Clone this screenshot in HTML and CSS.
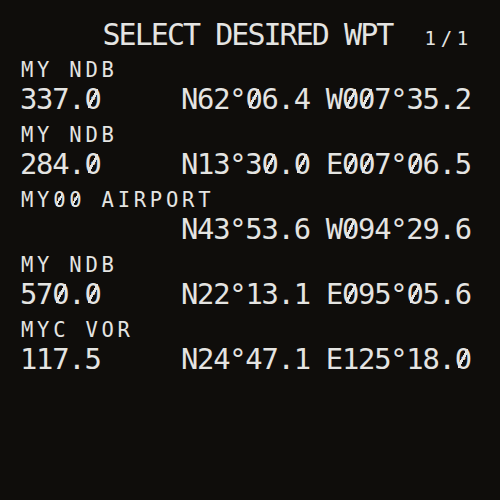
FILE: index.html
```html
<!DOCTYPE html>
<html>
<head>
<meta charset="utf-8">
<link rel="stylesheet" href="styles.css">
</head>
<body>
<div class="screen">
  <div class="title">     SELECT DESIRED WPT  <span class="page">1/1</span></div>
  <div class="pair">
    <div class="label">MY NDB</div>
    <div class="big">337.<span class="z">0</span>     N62°<span class="z">0</span>6.4 W<span class="z">0</span><span class="z">0</span>7°35.2</div>
  </div>
  <div class="pair">
    <div class="label">MY NDB</div>
    <div class="big">284.<span class="z">0</span>     N13°3<span class="z">0</span>.<span class="z">0</span> E<span class="z">0</span><span class="z">0</span>7°<span class="z">0</span>6.5</div>
  </div>
  <div class="pair">
    <div class="label">MY<span class="z">0</span><span class="z">0</span> AIRPORT</div>
    <div class="big">          N43°53.6 W<span class="z">0</span>94°29.6</div>
  </div>
  <div class="pair">
    <div class="label">MY NDB</div>
    <div class="big">57<span class="z">0</span>.<span class="z">0</span>     N22°13.1 E<span class="z">0</span>95°<span class="z">0</span>5.6</div>
  </div>
  <div class="pair">
    <div class="label">MYC VOR</div>
    <div class="big">117.5     N24°47.1 E125°18.<span class="z">0</span></div>
  </div>
</div>
</body>
</html>
```
FILE: styles.css
```css
html, body {
  margin: 0;
  padding: 0;
  background: #0f0d0b;
}
.screen {
  width: 500px;
  height: 500px;
  box-sizing: border-box;
  padding: 11px 0 0 20px;
  background: #0f0d0b;
  color: #e4e4e2;
  font-family: "DejaVu Sans Mono", "Liberation Mono", monospace;
  white-space: pre;
  display: flex;
  flex-direction: column;
  gap: 7px;
}
.title {
  font-size: 30px;
  line-height: 47px;
  height: 47px;
  letter-spacing: -1.96px;
  margin-bottom: -7px;
  padding-left: 2px;
}
.page {
  font-size: 19px;
  letter-spacing: 4.66px;
}
.pair {
  display: flex;
  flex-direction: column;
}
.label {
  font-size: 20.5px;
  line-height: 24px;
  height: 24px;
  letter-spacing: 3.76px;
  padding-left: 1px;
}
.big {
  font-size: 28.8px;
  line-height: 34px;
  height: 34px;
  letter-spacing: -1.24px;
}
.z {
  position: relative;
}
.z::after {
  content: "";
  position: absolute;
  left: 0.13em;
  width: 0.34em;
  top: 0.24em;
  height: 0.66em;
  background: linear-gradient(to bottom right,
    transparent calc(50% - 0.045em),
    currentColor calc(50% - 0.045em),
    currentColor calc(50% + 0.045em),
    transparent calc(50% + 0.045em));
}
```
